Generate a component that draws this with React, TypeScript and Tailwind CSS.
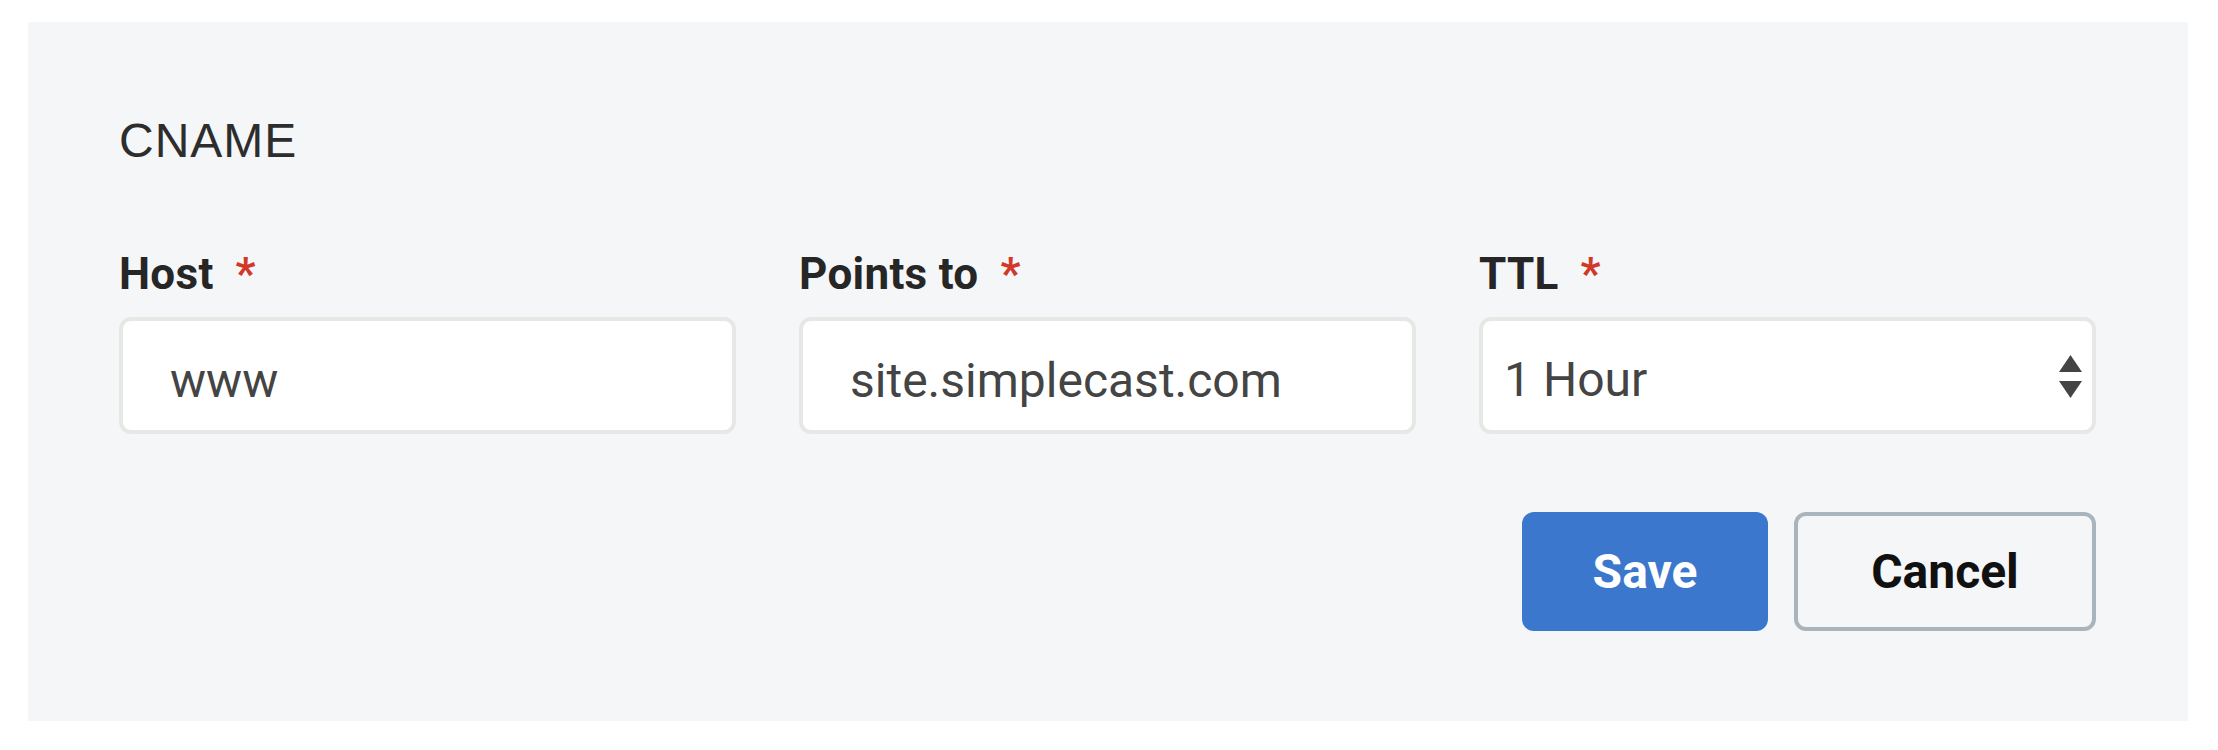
import React from 'react';

const FieldLabel: React.FC<{ text: string }> = ({ text }) => (
    <div className="h-[44px] whitespace-nowrap text-[44px] leading-[44px] font-['Roboto',sans-serif]">
        <span className="font-bold text-[#262626] tracking-[0.3px]">{text}</span>
        <span className="ml-[22px] font-bold text-[#d2382a]">*</span>
    </div>
);

const TextBox: React.FC<{ value: string }> = ({ value }) => (
    <div className="h-[117px] flex items-center pl-[47px] pt-[10px] bg-white border-4 border-[#e6e8e5] rounded-[12px] text-[48px] leading-none text-[#444] font-['Roboto',sans-serif]">
        {value}
    </div>
);

const SelectBox: React.FC<{ value: string }> = ({ value }) => (
    <div className="h-[117px] flex items-center justify-between pl-[21px] pr-[10px] bg-white border-4 border-[#e6e8e5] rounded-[12px] text-[48px] leading-none text-[#444] font-['Roboto',sans-serif]">
        <span className="pt-[8px]">{value}</span>
        <svg width="23" height="43" viewBox="0 0 23 43" className="mt-[2px]">
            <polygon points="11.5,0 23,17 0,17" fill="#444" />
            <polygon points="0,26 23,26 11.5,43" fill="#444" />
        </svg>
    </div>
);

const Field: React.FC<{ label: string; children: React.ReactNode }> = ({ label, children }) => (
    <div className="flex flex-col gap-[21px]">
        <FieldLabel text={label} />
        {children}
    </div>
);

const App: React.FC = () => {
    return (
        <div className="min-h-screen bg-white pt-[22px] pl-[28px]">
            <section className="w-[2160px] bg-[#f5f6f8] pt-[95px] pb-[90px] pl-[91px] pr-[92px]">
                <h2 className="text-[48px] leading-[48px] tracking-[1px] text-[#2d2d2d] font-['Liberation_Sans',sans-serif]">
                    CNAME
                </h2>
                <div className="mt-[87px] grid grid-cols-3 gap-x-[63px]">
                    <Field label="Host">
                        <TextBox value="www" />
                    </Field>
                    <Field label="Points to">
                        <TextBox value="site.simplecast.com" />
                    </Field>
                    <Field label="TTL">
                        <SelectBox value="1 Hour" />
                    </Field>
                </div>
                <div className="mt-[78px] flex justify-end gap-[26px] font-['Roboto',sans-serif]">
                    <button className="w-[246px] h-[119px] rounded-[12px] bg-[#3b77cc] text-white text-[48px] font-bold leading-none">
                        Save
                    </button>
                    <button className="w-[302px] h-[119px] rounded-[12px] border-4 border-[#aab4bd] text-[#111] text-[48px] font-bold leading-none">
                        Cancel
                    </button>
                </div>
            </section>
        </div>
    );
};

export default App;
